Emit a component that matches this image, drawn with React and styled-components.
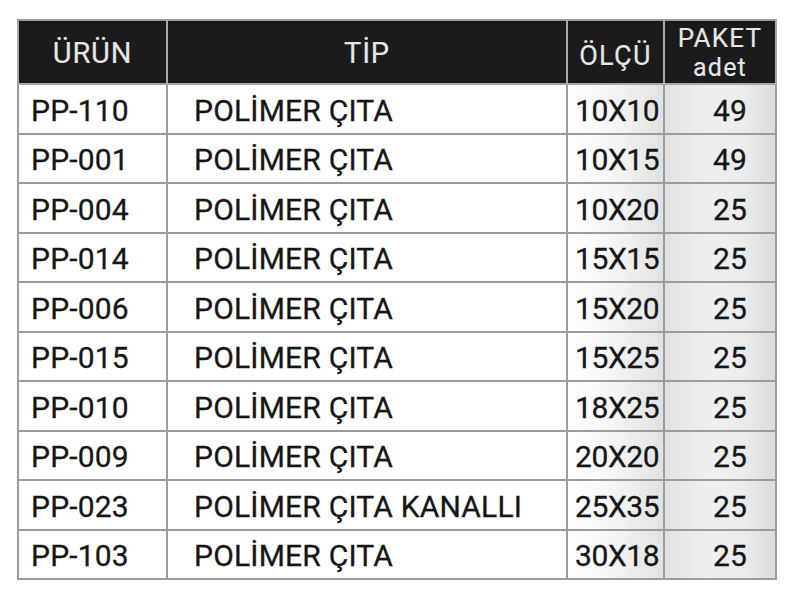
import React from "react";
import styled, { createGlobalStyle } from "styled-components";

const Global = createGlobalStyle`
  html, body { margin: 0; padding: 0; background: #ffffff; }
  body { font-family: Roboto, "DejaVu Sans Condensed", sans-serif; }
`;

const Page = styled.div`
  padding: 19px 0 0 17px;
`;

const Table = styled.table`
  width: 758px;
  table-layout: fixed;
  border-collapse: collapse;
  border: 2px solid #9c9c9c;
  font-family: Roboto, "DejaVu Sans Condensed", sans-serif;
  font-weight: 400;
  color: #161616;
`;

const HeadRow = styled.tr`
  height: 64px;
  background: #1b1b1b;
`;

const Th = styled.th`
  border: 2px solid #a8a8a8;
  border-top-color: #9c9c9c;
  color: #e6e6e6;
  font-weight: 400;
  font-size: ${(p) => p.$size || 29}px;
  line-height: ${(p) => p.$lh || "1"};
  text-align: center;
  vertical-align: ${(p) => p.$valign || "middle"};
  padding: ${(p) => p.$pad || "2px 0 0 0"};
  letter-spacing: ${(p) => p.$ls || "0.8px"};
  white-space: nowrap;
  -webkit-text-stroke: 0.15px #e6e6e6;
`;

const Row = styled.tr`
  height: 49.5px;
`;

const Td = styled.td`
  border: 2px solid #9c9c9c;
  font-size: 30px;
  line-height: 1;
  vertical-align: middle;
  padding: ${(p) => p.$pad || "4px 0 0 12px"};
  text-align: ${(p) => p.$align || "left"};
  white-space: nowrap;
  letter-spacing: ${(p) => p.$ls || "0.2px"};
  -webkit-text-stroke: 0.3px #161616;
  background: ${(p) =>
    p.$tone === "size"
      ? "linear-gradient(to right, #ffffff 0%, #f6f6f6 45%, #e2e2e2 100%)"
      : p.$tone === "qty"
      ? "linear-gradient(to right, #e2e2e2 0%, #efefef 40%, #ececec 70%, #dcdcdc 100%)"
      : "#ffffff"};
`;

const Line = styled.span`
  display: block;
  font-size: ${(p) => p.$size}px;
  line-height: ${(p) => p.$lh};
`;

const rows = [
  ["PP-110", "POLİMER ÇITA", "10X10", "49"],
  ["PP-001", "POLİMER ÇITA", "10X15", "49"],
  ["PP-004", "POLİMER ÇITA", "10X20", "25"],
  ["PP-014", "POLİMER ÇITA", "15X15", "25"],
  ["PP-006", "POLİMER ÇITA", "15X20", "25"],
  ["PP-015", "POLİMER ÇITA", "15X25", "25"],
  ["PP-010", "POLİMER ÇITA", "18X25", "25"],
  ["PP-009", "POLİMER ÇITA", "20X20", "25"],
  ["PP-023", "POLİMER ÇITA KANALLI", "25X35", "25"],
  ["PP-103", "POLİMER ÇITA", "30X18", "25"],
];

export default function App() {
  return (
    <Page>
      <Global />
      <Table>
        <colgroup>
          <col style={{ width: 149 }} />
          <col style={{ width: 400 }} />
          <col style={{ width: 97 }} />
          <col style={{ width: 112 }} />
        </colgroup>
        <thead>
          <HeadRow>
            <Th>ÜRÜN</Th>
            <Th>TİP</Th>
            <Th $size={27} $valign="bottom" $pad="0 0 13px 0" $ls="1.3px">
              ÖLÇÜ
            </Th>
            <Th $pad="0" $ls="1.2px">
              <Line $size={26} $lh="30px">PAKET</Line>
              <Line $size={25} $lh="29px">adet</Line>
            </Th>
          </HeadRow>
        </thead>
        <tbody>
          {rows.map(([code, type, size, qty]) => (
            <Row key={code}>
              <Td>{code}</Td>
              <Td $pad="4px 0 0 26px">{type}</Td>
              <Td $tone="size" $pad="4px 0 0 7px" $ls="-0.4px">
                {size}
              </Td>
              <Td $tone="qty" $align="center" $pad="4px 0 0 20px">
                {qty}
              </Td>
            </Row>
          ))}
        </tbody>
      </Table>
    </Page>
  );
}
